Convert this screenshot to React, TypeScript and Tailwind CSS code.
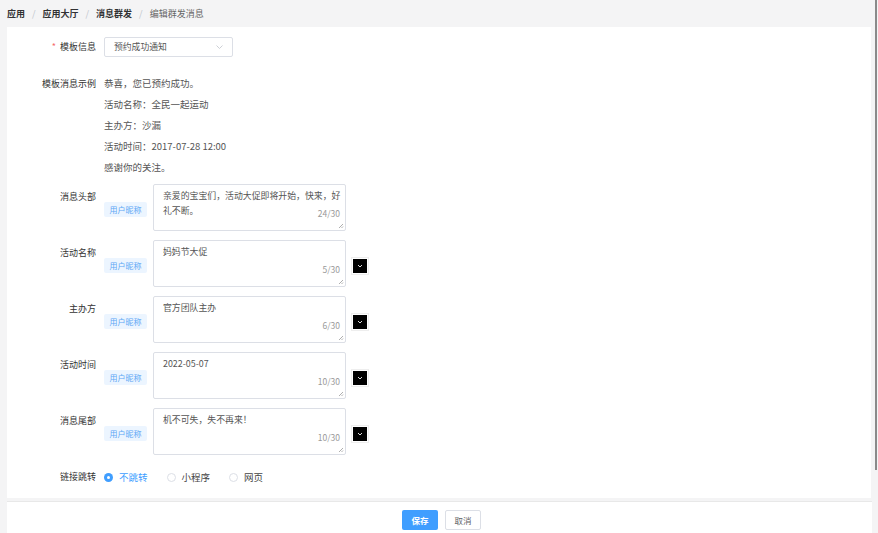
import React from "react";

const font = { fontFamily: '"Noto Sans CJK SC", "Noto Sans", sans-serif' };

interface FieldProps {
  label: string;
  value: string;
  count: string;
  withButton?: boolean;
}

function TextField({ label, value, count, withButton = true }: FieldProps) {
  return (
    <div className="flex items-start h-[47px]">
      <div className="w-[89px] text-right text-[9px] text-[#333] mt-[6px] leading-[14px]">{label}</div>
      <div className="ml-[8px] mt-[18px] h-[15px] w-[43px] bg-[#ecf5ff] text-[#5ca7f5] text-[8px] flex items-center justify-center rounded-[2px]">
        用户昵称
      </div>
      <div className="ml-[6px] relative w-[193px] h-[47px] border border-[#dcdfe6] rounded-[2px] bg-white">
        <div className="pl-[9px] pr-[3px] pt-[3px] text-[8.9px] leading-[15px] text-[#555]">{value}</div>
        <div className="absolute right-[5px] bottom-[10px] text-[8.5px] text-[#999]">{count}</div>
        <svg className="absolute right-[1px] bottom-[1px]" width="6" height="6" viewBox="0 0 6 6">
          <path d="M5 1 L1 5 M5 3.5 L3.5 5" stroke="#999" strokeWidth="0.8" />
        </svg>
      </div>
      {withButton && (
        <div className="ml-[7px] mt-[19px] w-[14px] h-[14px] bg-black flex items-center justify-center outline outline-1 outline-offset-1 outline-[#eeeeee]">
          <svg width="6" height="4" viewBox="0 0 6 4">
            <path d="M1 1 L3 3 L5 1" stroke="#ddd" strokeWidth="1" fill="none" />
          </svg>
        </div>
      )}
    </div>
  );
}

function Radio({ label, checked }: { label: string; checked?: boolean }) {
  return (
    <div className="flex items-center gap-[6px]">
      {checked ? (
        <div className="w-[9px] h-[9px] rounded-full bg-[#409eff] flex items-center justify-center">
          <div className="w-[3px] h-[3px] rounded-full bg-white" />
        </div>
      ) : (
        <div className="w-[9px] h-[9px] rounded-full border border-[#dcdfe6] bg-white" />
      )}
      <span className={`text-[9.5px] ${checked ? "text-[#409eff]" : "text-[#444]"}`}>{label}</span>
    </div>
  );
}

export default function App() {
  const sample = [
    "恭喜，您已预约成功。",
    "活动名称：全民一起运动",
    "主办方：沙漏",
    "活动时间：2017-07-28 12:00",
    "感谢你的关注。",
  ];

  return (
    <div className="w-[878px] h-[533px] bg-[#f4f4f5] flex overflow-hidden" style={font}>
      <div className="w-[874px] flex flex-col">
        {/* 面包屑 */}
        <div className="h-[27px] pl-[7px] flex items-center text-[9px]">
          <span className="font-bold text-[#303133]">应用</span>
          <span className="mx-[7px] text-[#c0c4cc]">/</span>
          <span className="font-bold text-[#303133]">应用大厅</span>
          <span className="mx-[7px] text-[#c0c4cc]">/</span>
          <span className="font-bold text-[#303133]">消息群发</span>
          <span className="mx-[7px] text-[#c0c4cc]">/</span>
          <span className="text-[#666]">编辑群发消息</span>
        </div>

        {/* 表单 */}
        <div className="ml-[7px] w-[864px] h-[471px] bg-white pt-[10px]">
          <div className="flex items-center h-[20px]">
            <div className="w-[89px] text-right text-[9px] text-[#333]">
              <span className="text-[#f56c6c] mr-[4px]">*</span>模板信息
            </div>
            <div className="ml-[8px] w-[129px] h-[20px] border border-[#dcdfe6] rounded-[2px] flex items-center justify-between pl-[9px] pr-[9px]">
              <span className="text-[8.8px] text-[#555]">预约成功通知</span>
              <svg width="7" height="4" viewBox="0 0 7 4">
                <path d="M0.5 0.5 L3.5 3.5 L6.5 0.5" stroke="#c0c4cc" strokeWidth="0.8" fill="none" />
              </svg>
            </div>
          </div>

          <div className="flex mt-[16px]">
            <div className="w-[89px] text-right text-[9px] text-[#333] leading-[21px]">模板消息示例</div>
            <div className="ml-[8px] flex flex-col">
              {sample.map((s) => (
                <div key={s} className="text-[9.5px] text-[#555] leading-[21px]">{s}</div>
              ))}
            </div>
          </div>

          <div className="mt-[6px] flex flex-col gap-[9px]">
            <TextField label="消息头部" value="亲爱的宝宝们，活动大促即将开始，快来，好礼不断。" count="24/30" withButton={false} />
            <TextField label="活动名称" value="妈妈节大促" count="5/30" />
            <TextField label="主办方" value="官方团队主办" count="6/30" />
            <TextField label="活动时间" value="2022-05-07" count="10/30" />
            <TextField label="消息尾部" value="机不可失，失不再来！" count="10/30" />
          </div>

          <div className="flex items-center mt-[15px] h-[14px]">
            <div className="w-[89px] text-right text-[9px] text-[#333]">链接跳转</div>
            <div className="ml-[8px] flex items-center gap-[19px]">
              <Radio label="不跳转" checked />
              <Radio label="小程序" />
              <Radio label="网页" />
            </div>
          </div>
        </div>

        {/* 底部按钮 */}
        <div className="ml-[7px] mt-[3px] w-[865px] flex-1 bg-white border-t border-[#e8e8e8] flex justify-center items-start pt-[8px] pl-[4px] gap-[7px]">
          <button className="w-[36px] h-[20px] bg-[#409eff] text-white text-[8.5px] font-bold rounded-[2px]">保存</button>
          <button className="w-[36px] h-[20px] bg-white border border-[#dcdfe6] text-[#606266] text-[8.5px] rounded-[2px]">取消</button>
        </div>
      </div>

      {/* 滚动条 */}
      <div className="w-[4px] flex flex-col">
        <div className="ml-[1px] w-[2px] h-[470px] bg-[#8a8a8a]" />
      </div>
    </div>
  );
}
